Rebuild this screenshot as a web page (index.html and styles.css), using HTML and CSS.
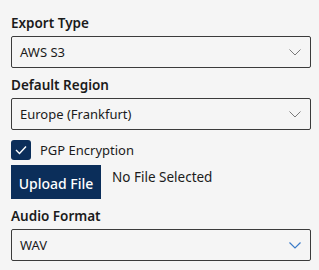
FILE: index.html
```html
<!DOCTYPE html>
<html>
<head>
<meta charset="utf-8">
<link rel="stylesheet" href="styles.css">
</head>
<body>
<div class="form">
  <div class="field">
    <div class="label">Export Type</div>
    <div class="select">
      <span class="value">AWS S3</span>
      <svg class="chev" width="12" height="7" viewBox="0 0 12 7"><path d="M0.5 0.5 L6 6 L11.5 0.5" fill="none" stroke="#7a7a7a" stroke-width="1"/></svg>
    </div>
  </div>
  <div class="field">
    <div class="label">Default Region</div>
    <div class="select">
      <span class="value">Europe (Frankfurt)</span>
      <svg class="chev" width="12" height="7" viewBox="0 0 12 7"><path d="M0.5 0.5 L6 6 L11.5 0.5" fill="none" stroke="#7a7a7a" stroke-width="1"/></svg>
    </div>
  </div>
  <div class="check-row">
    <span class="checkbox">
      <svg width="12" height="10" viewBox="0 0 12 10"><path d="M1 5 L4.5 8.5 L11 1.5" fill="none" stroke="#fff" stroke-width="1.4"/></svg>
    </span>
    <span class="check-label">PGP Encryption</span>
  </div>
  <div class="upload-row">
    <button class="btn">Upload File</button>
    <span class="file-text">No File Selected</span>
  </div>
  <div class="field">
    <div class="label">Audio Format</div>
    <div class="select">
      <span class="value">WAV</span>
      <svg class="chev" width="12" height="7" viewBox="0 0 12 7"><path d="M0.5 0.5 L6 6 L11.5 0.5" fill="none" stroke="#3a7bc8" stroke-width="1.2"/></svg>
    </div>
  </div>
</div>
</body>
</html>
```
FILE: styles.css
```css
html, body {
  margin: 0;
  padding: 0;
  background: #f5f5f5;
}
body {
  font-family: "Noto Sans", "Open Sans", sans-serif;
  color: #1b1b1b;
}
.form {
  width: 300px;
  padding: 12px 0 0 11px;
  display: flex;
  flex-direction: column;
}
.field {
  display: flex;
  flex-direction: column;
  gap: 2px;
  margin-bottom: 6px;
}
.label {
  font-size: 13.5px;
  font-weight: 600;
  line-height: 22px;
  height: 22px;
}
.select {
  box-sizing: border-box;
  height: 32px;
  border: 1px solid #3b3b3b;
  border-radius: 2px;
  display: flex;
  align-items: center;
  justify-content: space-between;
  padding: 0 9px 0 8px;
  font-size: 13px;
}
.chev {
  display: block;
}
.check-row {
  display: flex;
  align-items: center;
  gap: 9px;
  margin-top: 4px;
  height: 20px;
}
.checkbox {
  width: 20px;
  height: 20px;
  border-radius: 3px;
  background: #0b2e5a;
  display: flex;
  align-items: center;
  justify-content: center;
}
.check-label {
  font-size: 13px;
}
.upload-row {
  display: flex;
  align-items: flex-start;
  gap: 11px;
  margin-top: 5px;
  margin-bottom: 6px;
}
.btn {
  width: 90px;
  height: 34px;
  background: #0b2e5a;
  color: #fff;
  border: none;
  border-radius: 0;
  font-family: "Noto Sans", "Open Sans", sans-serif;
  font-size: 14px;
  font-weight: 500;
  padding: 2px 0 0;
}
.file-text {
  font-size: 13.5px;
  line-height: 20px;
  padding-top: 2px;
}
```
